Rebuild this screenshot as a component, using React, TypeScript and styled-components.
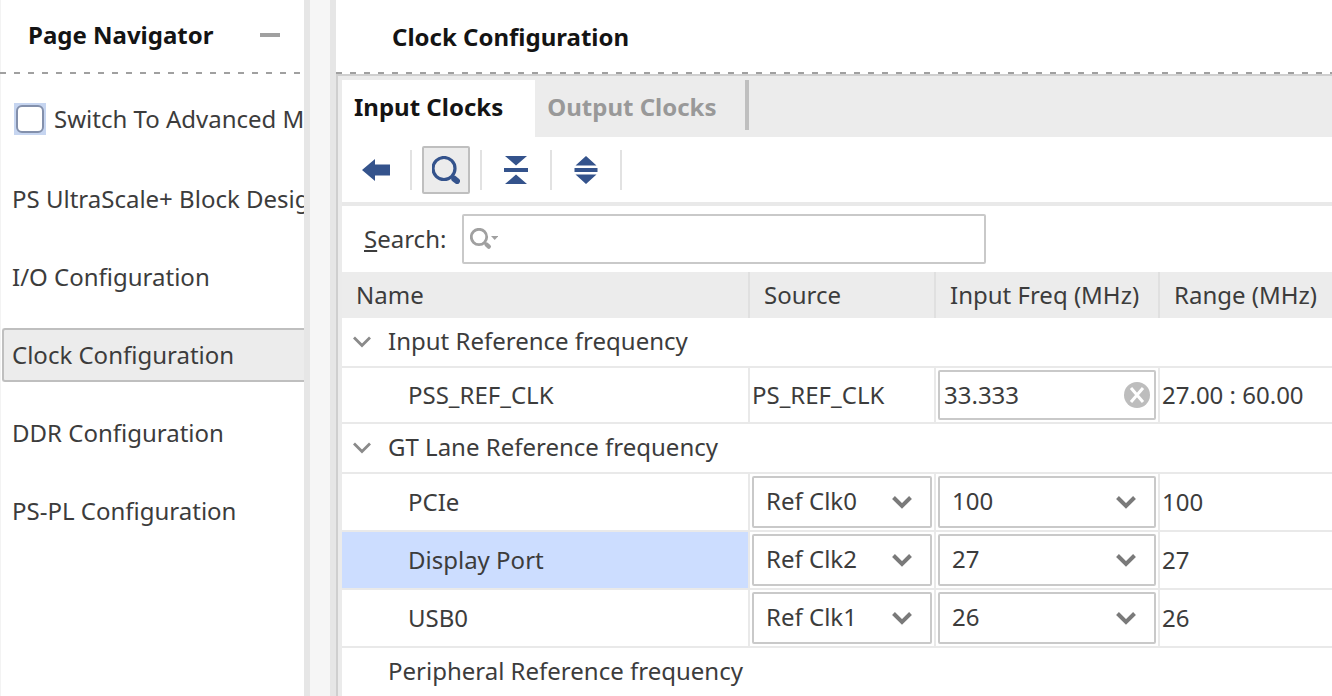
import React, { useState } from 'react';
import styled, { createGlobalStyle } from 'styled-components';

const ink = '#3c3c3c';
const line = '#e9e9e9';
const edge = '#c9c9c9';
const navy = '#34538c';

const GlobalStyle = createGlobalStyle`
  *, *::before, *::after { box-sizing: border-box; }
  body {
    margin: 0;
    background: #fff;
    color: ${ink};
    font: 400 24px/34px 'Noto Sans', sans-serif;
  }
  button, input, select { font: inherit; color: inherit; margin: 0; }
  button { padding: 0; border: 0; background: none; cursor: pointer; }
`;

const Shell = styled.div`
  display: flex;
  height: 100vh;
  overflow: hidden;
`;

const Sidebar = styled.aside`
  flex: 0 0 304px;
  overflow: hidden;
  white-space: nowrap;
  box-shadow: inset 1px 0 #f3f3f3;
`;

const Splitter = styled.div`
  flex: 0 0 32px;
  background: #f6f6f6;
  border: solid #e6e6e6;
  border-width: 0 6px;
`;

const Main = styled.main`
  flex: 1;
  min-width: 0;
  display: flex;
  flex-direction: column;
`;

const PanelHeader = styled.header<{ $indent: number; $lift: number }>`
  display: flex;
  align-items: center;
  height: 74px;
  padding: 0 24px ${p => p.$lift}px ${p => p.$indent}px;
  background: repeating-linear-gradient(90deg, #a0a0a0 0 6px, transparent 6px 14px) 0 100% / 100% 2px no-repeat;
`;

const Title = styled.h2`
  margin: 0;
  flex: 1;
  font-size: 24px;
  font-weight: 700;
  color: #141414;
`;

const Minimize = styled.button`
  width: 20px;
  height: 20px;
  display: grid;
  place-items: center;
  &::before { content: ''; width: 20px; height: 4px; background: #a0a0a0; }
`;

const Advanced = styled.label`
  display: flex;
  align-items: center;
  gap: 8px;
  padding: 28px 0 0 14px;
`;

const Check = styled.input`
  appearance: none;
  flex: none;
  width: 32px;
  height: 32px;
  padding: 2px;
  background: #c6d5f0;
  &::before {
    content: '';
    display: block;
    width: 28px;
    height: 28px;
    border: 2px solid #8390ac;
    border-radius: 6px;
    background: #fff;
  }
  &:checked::before { background: ${navy}; }
`;

const NavList = styled.ul`
  list-style: none;
  margin: 0;
  padding: 36px 0 0 2px;
  display: grid;
  gap: 24px;
`;

const NavLink = styled.a<{ $current: boolean }>`
  display: block;
  padding: 8px;
  color: inherit;
  text-decoration: none;
  border: 2px solid ${p => (p.$current ? '#bfbfbf' : 'transparent')};
  border-right: 0;
  border-radius: 3px 0 0 3px;
  background: ${p => (p.$current ? '#ececec' : 'transparent')};
`;

const Body = styled.section`
  flex: 1;
  min-height: 0;
  border-top: 2px solid #cfcfcf;
  border-left: 2px solid #cfcfcf;
  overflow: hidden;
`;

const Inset = styled.div`
  min-height: 100%;
  border-top: 4px solid #ebebeb;
  border-left: 4px solid #ebebeb;
`;

const Tabs = styled.div`
  display: flex;
  height: 57px;
  background: #ececec;
`;

const Tab = styled.button<{ $active: boolean }>`
  padding: 0 ${p => (p.$active ? 32 : 28)}px 4px 12px;
  font-weight: 700;
  color: ${p => (p.$active ? '#141414' : '#999')};
  background: ${p => (p.$active ? '#fff' : 'transparent')};
`;

const TabEnd = styled.span`
  width: 4px;
  height: 50px;
  background: #bfbfbf;
`;

const Toolbar = styled.div`
  display: flex;
  align-items: center;
  padding: 9px 10px 8px;
  border-bottom: 4px solid #e9e9e9;
`;

const Tool = styled.button<{ $pressed?: boolean }>`
  width: 48px;
  height: 48px;
  display: grid;
  place-items: center;
  border: 2px solid ${p => (p.$pressed ? '#bfbfbf' : 'transparent')};
  border-radius: 2px;
  background: ${p => (p.$pressed ? '#ececec' : 'transparent')};
`;

const Separator = styled.span`
  width: 2px;
  height: 40px;
  margin: 0 10px;
  background: #e2e2e2;
`;

const SearchRow = styled.div`
  display: flex;
  align-items: center;
  gap: 16px;
  padding: 8px 22px;
`;

const Mnemonic = styled.span`
  text-decoration: underline 2px;
  text-underline-offset: 2px;
`;

const Field = styled.div`
  position: relative;
  display: flex;
  align-items: center;
`;

const SearchField = styled(Field)`
  width: 524px;
`;

const TextInput = styled.input<{ $inset: number }>`
  width: 100%;
  min-width: 0;
  height: 50px;
  padding: 0 36px 2px ${p => p.$inset}px;
  border: 2px solid ${edge};
  border-radius: 2px;
  background: #fff;
  outline: none;
`;

const SearchGlyph = styled.svg`
  position: absolute;
  left: 8px;
  pointer-events: none;
`;

const ClearButton = styled.button`
  position: absolute;
  right: 6px;
  width: 26px;
  height: 26px;
  line-height: 0;
`;

const Select = styled.select`
  appearance: none;
  width: 100%;
  height: 52px;
  padding: 0 44px 2px 12px;
  border: 2px solid ${edge};
  border-radius: 2px;
  background: #fff;
  outline: none;
`;

const SelectArrow = styled.svg`
  position: absolute;
  right: 19px;
  pointer-events: none;
`;

const Table = styled.table`
  width: 100%;
  table-layout: fixed;
  border-collapse: separate;
  border-spacing: 0;
  white-space: nowrap;
  text-align: left;
`;

const HeadCell = styled.th<{ $width?: number }>`
  width: ${p => (p.$width ? `${p.$width}px` : 'auto')};
  height: 46px;
  padding: 0 0 0 14px;
  font-weight: 400;
  background: #ececec;
  border-right: 2px solid #e0e0e0;
  &:last-child { border-right: 0; }
`;

const GroupCell = styled.th`
  height: 50px;
  padding: 0 0 2px 10px;
  font-weight: 400;
  border-bottom: 2px solid ${line};
`;

const GroupToggle = styled.button`
  display: flex;
  align-items: center;
  gap: 16px;
`;

const GroupLabel = styled.span`
  padding-left: 36px;
`;

const NameCell = styled.th<{ $selected: boolean }>`
  padding: 0 0 0 66px;
  font-weight: 400;
  border: solid ${line};
  border-width: 0 2px 2px 0;
  background: ${p => (p.$selected ? '#ccddff' : 'transparent')};
`;

const Cell = styled.td`
  padding: 2px;
  border: solid ${line};
  border-width: 0 2px 2px 0;
  &:last-child { border-right: 0; }
`;

function ChevronSmall() {
  return (
    <svg width="20" height="16" viewBox="0 0 20 16" fill="none" stroke="#8a8a8a" strokeWidth="2.8">
      <path d="M2 4.500L10 12.500L18 4.500" />
    </svg>
  );
}

function Magnifier() {
  return (
    <svg width="28" height="28" viewBox="0 0 28 28" fill="none" stroke={navy}>
      <circle cx="12" cy="12.500" r="11" strokeWidth="3.2" />
      <path d="M22.300 22.800L25 25" strokeWidth="6" strokeLinecap="round" />
    </svg>
  );
}

function Dropdown({ label, value, options }: { label: string; value: string; options: string[] }) {
  const [current, setCurrent] = useState(value);
  return (
    <Field>
      <Select aria-label={label} value={current} onChange={e => setCurrent(e.target.value)}>
        {options.map(o => <option key={o}>{o}</option>)}
      </Select>
      <SelectArrow width="22" height="16" viewBox="0 0 22 16" fill="none" stroke="#7a7a7a" strokeWidth="4">
        <path d="M2.500 3.500L11 12L19.500 3.500" />
      </SelectArrow>
    </Field>
  );
}

const pages = [
  'PS UltraScale+ Block Design',
  'I/O Configuration',
  'Clock Configuration',
  'DDR Configuration',
  'PS-PL Configuration',
];

const lanes = [
  { name: 'PCIe', source: 'Ref Clk0', freq: '100' },
  { name: 'Display Port', source: 'Ref Clk2', freq: '27' },
  { name: 'USB0', source: 'Ref Clk1', freq: '26' },
];

const sources = ['Ref Clk0', 'Ref Clk1', 'Ref Clk2', 'Ref Clk3'];

export default function App() {
  const [freq, setFreq] = useState('33.333');
  return (
    <>
      <GlobalStyle />
      <Shell>
        <Sidebar>
          <PanelHeader $indent={28} $lift={4}>
            <Title>Page Navigator</Title>
            <Minimize aria-label="Minimize" />
          </PanelHeader>
          <Advanced>
            <Check type="checkbox" />
            Switch To Advanced Mode
          </Advanced>
          <nav>
            <NavList>
              {pages.map(page => (
                <li key={page}>
                  <NavLink href="#" $current={page === 'Clock Configuration'}>{page}</NavLink>
                </li>
              ))}
            </NavList>
          </nav>
        </Sidebar>
        <Splitter />
        <Main>
          <PanelHeader $indent={56} $lift={0}>
            <Title>Clock Configuration</Title>
          </PanelHeader>
          <Body>
            <Inset>
              <Tabs role="tablist">
                <Tab role="tab" aria-selected $active>Input Clocks</Tab>
                <Tab role="tab" $active={false}>Output Clocks</Tab>
                <TabEnd />
              </Tabs>
              <Toolbar>
                <Tool aria-label="Back">
                  <svg width="28" height="22" viewBox="0 0 28 22" fill={navy}>
                    <path d="M0 11L13 0V5.500H28V16.500H13V22Z" />
                  </svg>
                </Tool>
                <Separator />
                <Tool aria-label="Search" $pressed>
                  <Magnifier />
                </Tool>
                <Separator />
                <Tool aria-label="Collapse all">
                  <svg width="24" height="28" viewBox="0 0 24 28" fill={navy}>
                    <path d="M1 0H23L12 9.500ZM0 12H24V16H0ZM12 18.500L23 28H1Z" />
                  </svg>
                </Tool>
                <Separator />
                <Tool aria-label="Expand all">
                  <svg width="24" height="28" viewBox="0 0 24 28" fill={navy}>
                    <path d="M12 0L22.500 9.500H1.500ZM0.500 12H23.500V16H0.500ZM1.500 18.500H22.500L12 28Z" />
                  </svg>
                </Tool>
                <Separator />
              </Toolbar>
              <SearchRow>
                <label htmlFor="search"><Mnemonic>S</Mnemonic>earch:</label>
                <SearchField>
                  <TextInput id="search" type="text" $inset={38} />
                  <SearchGlyph width="28" height="22" viewBox="0 0 28 22" fill="none" stroke="#a0a0a0">
                    <circle cx="9" cy="9" r="7.700" strokeWidth="2.800" />
                    <path d="M16.500 16.500L18.800 18.600" strokeWidth="4.400" strokeLinecap="round" />
                    <path d="M21 8H28.500L24.700 12Z" fill="#a0a0a0" stroke="none" />
                  </SearchGlyph>
                </SearchField>
              </SearchRow>
              <Table>
                <thead>
                  <tr>
                    <HeadCell scope="col" $width={408}>Name</HeadCell>
                    <HeadCell scope="col" $width={186}>Source</HeadCell>
                    <HeadCell scope="col" $width={224}>Input Freq (MHz)</HeadCell>
                    <HeadCell scope="col">Range (MHz)</HeadCell>
                  </tr>
                </thead>
                <tbody>
                  <tr>
                    <GroupCell colSpan={4}>
                      <GroupToggle aria-expanded><ChevronSmall />Input Reference frequency</GroupToggle>
                    </GroupCell>
                  </tr>
                  <tr>
                    <NameCell scope="row" $selected={false}>PSS_REF_CLK</NameCell>
                    <Cell>PS_REF_CLK</Cell>
                    <Cell>
                      <Field>
                        <TextInput
                          type="text"
                          aria-label="PSS_REF_CLK input frequency"
                          $inset={4}
                          value={freq}
                          onChange={e => setFreq(e.target.value)}
                        />
                        <ClearButton aria-label="Clear" onClick={() => setFreq('')}>
                          <svg width="26" height="26" viewBox="0 0 26 26">
                            <circle cx="13" cy="13" r="13" fill="#bdbdbd" />
                            <path d="M7 6L19 20M19 6L7 20" stroke="#fff" strokeWidth="3" />
                          </svg>
                        </ClearButton>
                      </Field>
                    </Cell>
                    <Cell>27.00 : 60.00</Cell>
                  </tr>
                  <tr>
                    <GroupCell colSpan={4}>
                      <GroupToggle aria-expanded><ChevronSmall />GT Lane Reference frequency</GroupToggle>
                    </GroupCell>
                  </tr>
                  {lanes.map(lane => (
                    <tr key={lane.name}>
                      <NameCell scope="row" $selected={lane.name === 'Display Port'}>{lane.name}</NameCell>
                      <Cell><Dropdown label={`${lane.name} source`} value={lane.source} options={sources} /></Cell>
                      <Cell><Dropdown label={`${lane.name} input frequency`} value={lane.freq} options={['26', '27', '100']} /></Cell>
                      <Cell>{lane.freq}</Cell>
                    </tr>
                  ))}
                  <tr>
                    <GroupCell colSpan={4}><GroupLabel>Peripheral Reference frequency</GroupLabel></GroupCell>
                  </tr>
                </tbody>
              </Table>
            </Inset>
          </Body>
        </Main>
      </Shell>
    </>
  );
}
